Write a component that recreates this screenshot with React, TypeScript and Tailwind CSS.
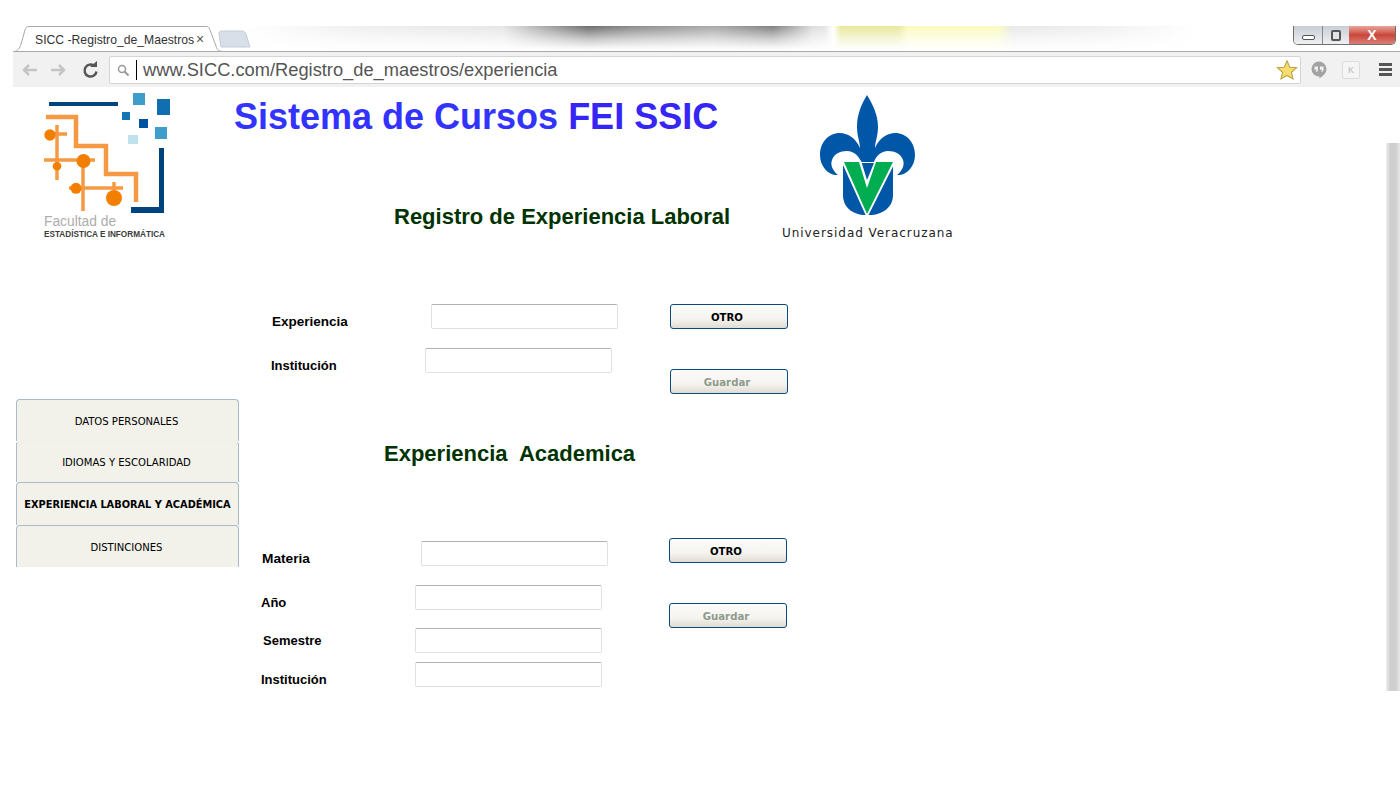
import React from "react";

const sans = "font-['Liberation_Sans',Arial,sans-serif]";
const tah = "font-['DejaVu_Sans_Condensed','DejaVu_Sans',Verdana,sans-serif]";

function FeiLogo() {
  const o = "#f59a42";
  const d = "#f37f00";
  return (
    <svg width="150" height="155" viewBox="20 90 150 155" className="block">
      <rect x="49" y="102" width="69" height="4" fill="#00447e" />
      <rect x="133" y="93" width="12" height="12" fill="#3f9dc9" />
      <rect x="157" y="99" width="16" height="16" fill="#0f6fb0" />
      <rect x="122" y="112" width="8" height="8" fill="#1476b5" />
      <rect x="139" y="119" width="9" height="9" fill="#00539f" />
      <rect x="155" y="127" width="12" height="12" fill="#3f9dc9" />
      <rect x="128" y="135" width="10" height="9" fill="#bfe2ec" />
      <path d="M159 148h5v65h-33v-6h28z" fill="#00447e" />
      <path d="M46 117h30v29h30v28h30v28" fill="none" stroke={o} strokeWidth="4.500" />
      <path d="M57 125v55M44 160h51M50 134h17M83 165v46M69 188h54M114 182v8" fill="none" stroke={o} strokeWidth="3.500" />
      <circle cx="50" cy="135" r="5.700" fill={d} />
      <circle cx="83.500" cy="161" r="7" fill={d} />
      <circle cx="57" cy="166.300" r="4.300" fill={d} />
      <circle cx="76" cy="188.300" r="5.500" fill={d} />
      <circle cx="114" cy="198" r="8" fill={d} />
      <text x="44" y="226" fontFamily="Liberation Sans, sans-serif" fontSize="13.800" fill="#adadad">Facultad de</text>
      <text x="44" y="237" fontFamily="Liberation Sans, sans-serif" fontSize="8.200" fontWeight="700" fill="#3c3c3c">ESTADÍSTICA E INFORMÁTICA</text>
    </svg>
  );
}

function UvLogo() {
  return (
    <svg width="180" height="150" viewBox="778 92 180 150" className="block shrink-0 ml-[5px] mt-[5px]">
      <path
        d="M867 95C873 105 878 115 878 127C878 136 875 142 875 148C879 138 888 133 895 133C907 133 915 143 915 155C915 167 906 176 897 175C902 171 905 165 903 160C901 154 895 151 888 151C881 151 876 156 874 162L861 162C859 156 854 151 847 151C840 151 834 154 832 160C830 165 833 171 838 175C829 176 820 167 820 155C820 143 828 133 840 133C847 133 856 138 860 148C860 142 857 136 857 127C857 115 861 105 867 95Z"
        fill="#0057a8"
      />
      <path d="M843 163L843 195C843 207 852 215 866 215L869 215C883 215 893 207 893 195L893 163Z" fill="#0057a8" />
      <path d="M841 160.500H861L867 180L875 160.500H896L868 216H866Z" fill="#fff" />
      <path d="M844 162H859L867 188L876 162H893L867 214Z" fill="#00ad50" />
      <text x="782" y="237" fontFamily="DejaVu Sans, sans-serif" fontSize="12" letterSpacing="0.950" fill="#222">Universidad Veracruzana</text>
    </svg>
  );
}

function Field({ pl, labelW, label, gap, labelTop = 8, size = 13 }: { pl: number; labelW: number; label: string; gap: number; labelTop?: number; size?: number }) {
  return (
    <div className="flex items-start" style={{ paddingLeft: pl, marginTop: gap }}>
      <div className={`${sans} leading-5 font-bold text-black shrink-0`} style={{ width: labelW, marginTop: labelTop, fontSize: size }}>
        {label}
      </div>
      <input
        readOnly
        aria-label={label}
        className="w-[187px] h-[25px] bg-white border border-[#e0e0e8] border-t-[#b0b0b8] rounded-[2px] shrink-0"
      />
    </div>
  );
}

function FormButton({ text, muted, top }: { text: string; muted?: boolean; top: number }) {
  return (
    <button
      type="button"
      style={{ marginTop: top }}
      className={`${tah} block w-[118px] h-[25px] pr-[4px] pt-[3px] leading-4 rounded-[3px] border border-[#0b4a7f] bg-[linear-gradient(180deg,#fbfbf9_0%,#f5f4f0_60%,#e0dcd2_100%)] text-[11.300px] font-bold ${muted ? "text-[#8f9a8c]" : "text-black"}`}
    >
      {text}
    </button>
  );
}

function NavItem({ text, active, seam, h }: { text: string; active?: boolean; seam?: boolean; h: number }) {
  return (
    <div
      style={{ height: h }}
      className={`${tah} flex items-center justify-center pt-[3px] bg-[#f2f2ea] border-x border-t border-[#a9bacb] rounded-t-[4px] text-black whitespace-nowrap ${seam ? "border-t-[#eeeeea]" : ""} ${active ? "text-[10.900px] font-bold" : "text-[11.200px] pr-[2px]"}`}
    >
      {text}
    </div>
  );
}

function Chrome() {
  return (
    <div className="ml-[13px] h-[61px]">
      <div className="h-[26px] relative overflow-hidden border-b border-[#a8a8a8] bg-[linear-gradient(90deg,#ffffff_230px,#f0f0f0_340px,#e6e6e6_490px,#6c6c6c_575px,#8c8c8c_620px,#aaaaaa_700px,#808080_760px,#dddddd_800px,#e4e4e4_812px,#ffffff_820px,#e8e89c_828px,#e8e89c_885px,#fbfbc0_895px,#fbfbc0_985px,#e8e8e8_1000px,#f0f0f0_1090px,#ffffff_1180px)]">
        <div className="absolute inset-0 bg-[linear-gradient(180deg,transparent_0%,rgba(255,255,255,0.6)_50%,rgba(255,255,255,0.92)_85%,#ffffff_100%)]" />
        <svg width="240" height="26" viewBox="0 0 240 26" className="absolute left-0 top-0">
          <path d="M0 26C5 25 7 22 8 18L12 4C13 1 14 .5 16 .5H193C195 .5 196 1 197 4L203 20C204 24 206 25 209 25.500V26Z" fill="#fff" stroke="#a8a8a8" />
          <path d="M208 21L206 8C205.500 6 207 5 209 5H229C231 5 232 6 233 8L237 21Z" fill="#d8dfe9" stroke="#c6ccd6" />
        </svg>
        <div className={`${sans} absolute left-[22px] top-[6px] text-[12.200px] leading-4 text-[#333] whitespace-nowrap`}>SICC -Registro_de_Maestros</div>
        <div className={`${sans} absolute left-[183px] top-[5px] text-[14px] leading-4 text-[#555]`}>×</div>
        <div className="absolute left-[1280px] top-0 w-[103px] h-[19px] flex rounded-b-[5px] border border-t-0 border-[#6e6e6e] overflow-hidden">
          <div className="w-[29px] bg-gradient-to-b from-[#c9ced6] to-[#eef0f3] border-r border-[#8a8a8a] flex items-center justify-center">
            <div className="w-[13px] h-[5px] border border-[#555] rounded-[2px] bg-white mt-[5px]" />
          </div>
          <div className="w-[26px] bg-gradient-to-b from-[#c9ced6] to-[#eef0f3] flex items-center justify-center">
            <div className="w-[10px] h-[11px] border-2 border-[#555] rounded-[2px] bg-[#dfe2e6]" />
          </div>
          <div className="flex-1 bg-gradient-to-b from-[#e9a49c] via-[#c9453a] to-[#d98078] flex items-center justify-center">
            <span className={`${sans} text-[14px] leading-none font-bold text-white`}>X</span>
          </div>
        </div>
      </div>
      <div className="h-[35px] bg-[#f1f1f1] flex items-center">
        <svg width="90" height="20" viewBox="0 0 90 20" className="shrink-0 ml-[6px]">
          <path d="M18 10H5M10 5l-5 5 5 5" fill="none" stroke="#c4c4c4" strokeWidth="2.500" />
          <path d="M32 10h13M40 5l5 5-5 5" fill="none" stroke="#c4c4c4" strokeWidth="2.500" />
          <path d="M76 6.500a6 6 0 1 0 1.500 5" fill="none" stroke="#555" strokeWidth="2.500" />
          <path d="M71 7h7V1z" fill="#555" />
        </svg>
        <div className="w-[1192px] h-[28px] bg-white border border-[#d4d4d4] rounded-[2px] flex items-center relative shrink-0">
          <svg width="14" height="14" viewBox="0 0 14 14" className="ml-[6px]">
            <circle cx="6" cy="6" r="3.500" fill="none" stroke="#999" strokeWidth="1.500" />
            <path d="M8.500 8.500l4 4" stroke="#999" strokeWidth="2" />
          </svg>
          <div className="w-px h-[20px] bg-black ml-[6px]" />
          <div className={`${sans} text-[18.300px] leading-6 text-[#555] ml-[6px] whitespace-nowrap`}>www.SICC.com/Registro_de_maestros/experiencia</div>
          <svg width="22" height="22" viewBox="0 0 24 24" className="absolute right-[2px] top-[2px]">
            <path d="M12 2l3 7 7.500.6-5.700 4.900 1.800 7.300L12 18l-6.600 3.800 1.800-7.300L1.500 9.600 9 9z" fill="#f7dc6f" stroke="#b9a24a" strokeWidth="1.200" />
          </svg>
        </div>
        <svg width="18" height="20" viewBox="0 0 18 20" className="ml-[9px] shrink-0">
          <path d="M9 1.500a7.500 7.500 0 0 1 7.500 7.500c0 4.500-3.800 7-7 9.500V16.500A7.500 7.500 0 0 1 1.500 9 7.500 7.500 0 0 1 9 1.500z" fill="#a3a3a3" />
          <path d="M4.500 6.500h3.500v3.200c0 1-.8 2-2 2.300l-.4-.9c.6-.2 1-.7 1-1.400H4.500zM10 6.500h3.500v3.200c0 1-.8 2-2 2.300l-.4-.9c.6-.2 1-.7 1-1.400H10z" fill="#f1f1f1" />
        </svg>
        <div className={`${sans} ml-[14px] w-[18px] h-[18px] border border-[#dcdcdc] rounded-[2px] bg-[#f5f5f5] text-[9px] leading-[16px] text-center text-[#b5b5b5] shrink-0`}>K</div>
        <div className="ml-[19px] w-[13px] flex flex-col gap-[2px] shrink-0">
          <div className="h-[3px] bg-[#555]" />
          <div className="h-[3px] bg-[#555]" />
          <div className="h-[3px] bg-[#555]" />
        </div>
      </div>
    </div>
  );
}

export default function App() {
  return (
    <div className="w-[1400px] h-[800px] bg-white overflow-hidden relative">
      <div className="h-[26px]" />
      <Chrome />
      <div className="flex h-[713px]">
        <aside className="w-[239px] shrink-0 pl-[16px]">
          <div className="h-[155px] ml-[4px] mt-[3px]"><FeiLogo /></div>
          <div className="mt-[154px]">
            <NavItem text="DATOS PERSONALES" h={42} />
            <NavItem text="IDIOMAS Y ESCOLARIDAD" seam h={41} />
            <NavItem text="EXPERIENCIA LABORAL Y ACADÉMICA" active h={43} />
            <NavItem text="DISTINCIONES" h={42} />
          </div>
        </aside>
        <main className="flex-1 min-w-0">
          <div className="flex items-start">
            <div className="w-[534px] shrink-0">
              <h1 className={`${sans} ml-[-5px] mt-[9px] text-[36px] leading-[42px] font-bold whitespace-nowrap text-[#3333ff]`}>
                Sistema de Cursos <span className="text-[#3626f5]">FEI SSIC</span>
              </h1>
              <h2 className={`${sans} ml-[155px] mt-[66px] text-[22px] leading-[26px] font-bold text-[#003300]`}>Registro de Experiencia Laboral</h2>
            </div>
            <UvLogo />
          </div>
          <div className="flex mt-[62px]">
            <div className="w-[431px] shrink-0">
              <Field pl={33} labelW={159} label="Experiencia" gap={0} size={13.500} />
              <Field pl={32} labelW={154} label="Institución" gap={16} />
            </div>
            <div>
              <FormButton text="OTRO" top={0} />
              <FormButton text="Guardar" muted top={40} />
            </div>
          </div>
          <h2 className={`${sans} ml-[145px] mt-[47px] text-[22px] leading-[26px] font-bold text-[#003300] whitespace-pre`}>Experiencia  Academica</h2>
          <div className="flex mt-[71px]">
            <div className="w-[430px] shrink-0">
              <Field pl={23} labelW={159} label="Materia" gap={3} size={13.700} />
              <Field pl={22} labelW={154} label="Año" gap={16} />
              <Field pl={24} labelW={152} label="Semestre" gap={15} labelTop={3} />
              <Field pl={22} labelW={154} label="Institución" gap={9} />
            </div>
            <div>
              <FormButton text="OTRO" top={0} />
              <FormButton text="Guardar" muted top={40} />
            </div>
          </div>
        </main>
      </div>
      <div className="absolute left-[1386px] top-[143px] w-[14px] h-[548px] bg-[linear-gradient(90deg,#f0f0f0,#cfcfcf_30%,#cfcfcf_70%,#e8e8e8)]" />
    </div>
  );
}
